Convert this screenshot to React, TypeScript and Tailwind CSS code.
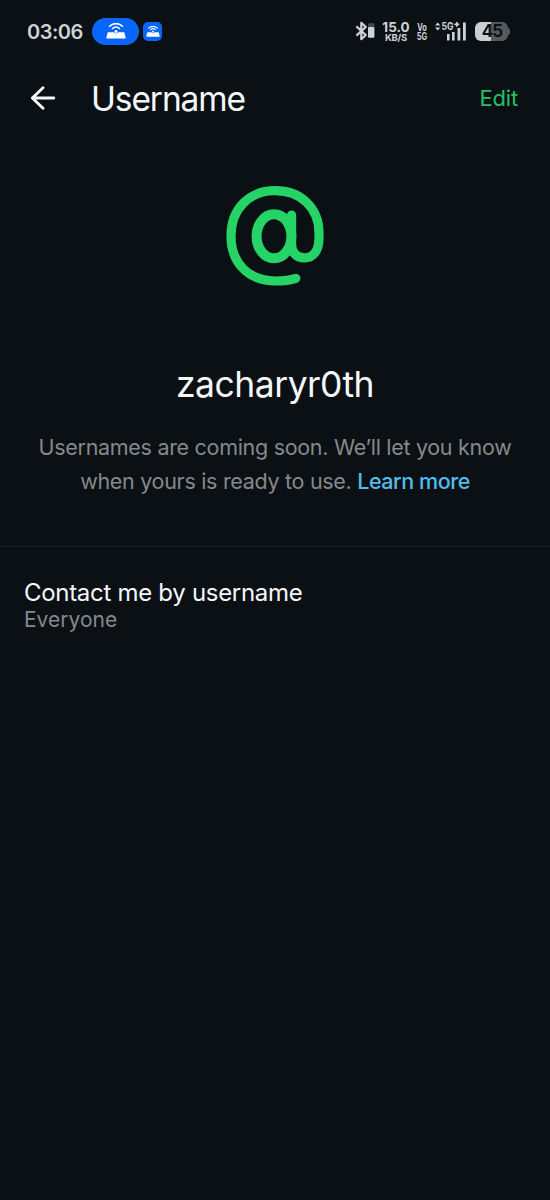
import React from 'react';

function CastIcon({ className }: { className: string }) {
  return (
    <svg viewBox="0 0 20 16" className={className} fill="none" aria-hidden="true">
      <path d="M1.8 9.2h16.4l1.4 4.8c.3.9-.1 1.5-1 1.5H1.4c-.9 0-1.3-.6-1-1.5z" fill="white" />
      <circle cx="10" cy="8.2" r="2.2" fill="#0866ff" />
      <circle cx="10" cy="8.4" r="1.5" fill="white" />
      <path d="M6.6 5.5a5 5 0 0 1 6.8 0M3.6 3.2a9.2 9.2 0 0 1 12.8 0" stroke="white" strokeWidth="1.6" strokeLinecap="round" />
    </svg>
  );
}

function BluetoothIcon() {
  return (
    <svg viewBox="0 0 20 20" className="h-5 w-5" fill="none" aria-hidden="true">
      <path d="M1.4 5.4l9.4 8.6-4.5 4.2V1.8l4.5 4.2-9.4 8.6" stroke="#d0d3d5" strokeWidth="2.2" strokeLinejoin="round" />
      <rect x="13" y="2.3" width="6.4" height="4" rx="1" fill="#45494c" />
      <rect x="13" y="6" width="6.4" height="10.8" rx="1" fill="#d0d3d5" />
    </svg>
  );
}

function SignalIcon() {
  return (
    <svg viewBox="0 0 32 20" className="h-5 w-8" aria-hidden="true">
      <path d="M0 4.6l2.7-3.1 2.7 3.1zM0 6.4h5.4L2.7 9.5z" fill="#d0d3d5" />
      <text x="6.6" y="8.8" fontFamily="Inter, sans-serif" fontSize="10.5" fontWeight="700" textLength="12" lengthAdjust="spacingAndGlyphs" fill="#d0d3d5">5G</text>
      <path d="M19.4 3.4h4.8M21.8 1v4.8" stroke="#d0d3d5" strokeWidth="1.6" />
      <rect x="12" y="13" width="2.6" height="6.5" fill="#d0d3d5" />
      <rect x="17" y="11" width="2.6" height="8.5" fill="#d0d3d5" />
      <rect x="22.5" y="7" width="2.8" height="12.5" fill="#d0d3d5" />
      <rect x="28" y="1.5" width="2.8" height="18" fill="#d0d3d5" />
    </svg>
  );
}

function StatusBar() {
  return (
    <div className="flex h-[62px] items-center pl-[27px] pr-10 text-[#d0d3d5]">
      <span className="w-[65px] pt-px text-[20px] leading-6 font-semibold tracking-[-0.5px]">03:06</span>
      <div className="flex h-[27px] w-[47px] items-center justify-center rounded-full bg-[#0866ff]">
        <CastIcon className="h-4 w-5" />
      </div>
      <div className="ml-1 flex h-[19px] w-[19px] items-center justify-center rounded-[5px] bg-[#0866ff]">
        <CastIcon className="h-[11px] w-[14px]" />
      </div>

      <div className="ml-auto flex items-center">
        <BluetoothIcon />
        <div className="ml-[7px] w-[28px] pt-px text-center font-bold">
          <div className="text-[13.5px] leading-[10px]">15.0</div>
          <div className="pt-px text-[9.5px] leading-[9px] tracking-[-0.2px]">KB/S</div>
        </div>
        <div className="ml-[6px] flex w-[12px] scale-x-75 flex-col items-center pt-px text-[10px] leading-[9px] font-bold">
          <div>Vo</div>
          <div>5G</div>
        </div>
        <div className="ml-[7px]">
          <SignalIcon />
        </div>
        <div className="ml-2 flex h-[19px] w-[33px] items-center justify-center rounded-[6px] bg-linear-to-r from-[#caced0] from-48% to-[#565a5d] to-48% pt-px pl-px text-[17px] leading-none font-bold tracking-[-1px] text-[#0b1014]">
          45
        </div>
        <div className="h-[7px] w-[2px] rounded-r-full bg-[#565a5d]" />
      </div>
    </div>
  );
}

function AtSign() {
  return (
    <svg viewBox="0 0 120 120" className="h-[120px] w-[120px]" fill="none" stroke="#25d366" strokeLinecap="round" aria-hidden="true">
      <path d="M80.8 103.3C75 105.3 69 106 60.5 106C33.5 106 16 88 16 61C16 34 34 15.7 60 15.7C86 15.7 104 33 104 58V62.5C104 75.5 98.5 82.8 89.5 82.8C81 82.8 76.6 77.5 76.6 69V40" strokeWidth="9.2" />
      <ellipse cx="59" cy="61.3" rx="17.4" ry="22" strokeWidth="10" />
    </svg>
  );
}

export default function App() {
  return (
    <div className="min-h-[1200px] w-full bg-[#0b1014] font-[Inter,sans-serif] text-[#f5f8fa]">
      <StatusBar />

      <header className="flex h-[72px] items-center pr-8 pl-[30px]">
        <button aria-label="Back">
          <svg viewBox="0 0 26 24" className="h-6 w-[26px]" fill="none" stroke="currentColor" strokeWidth="2.9" strokeLinecap="round" strokeLinejoin="round" aria-hidden="true">
            <path d="M13 1.8L2.4 12L13 22.2M2.4 12H23.8" />
          </svg>
        </button>
        <h1 className="ml-[35px] pt-px text-[33.5px] leading-10 tracking-[-1.1px]">Username</h1>
        <button className="ml-auto text-[22px] leading-7 tracking-[-0.2px] text-[#25c063]">Edit</button>
      </header>

      <section className="flex flex-col items-center border-b border-[#1b2024] pt-[41px] pb-12">
        <AtSign />
        <h2 className="mt-[67px] text-[35.5px] leading-[46px] tracking-[-0.5px]">zacharyr0th</h2>
        <p className="mt-[23px] text-center text-[21.5px] leading-[33.5px] tracking-[-0.3px] text-[#85898c]">
          Usernames are coming soon. We’ll let you know
          <br />
          when yours is ready to use. <a className="font-medium tracking-[-0.45px] text-[#53bdeb]">Learn more</a>
        </p>
      </section>

      <div className="px-6 pt-[30px]">
        <div className="text-2xl leading-8 tracking-[-0.3px]">Contact me by username</div>
        <div className="text-[21px] leading-[22px] text-[#85898c]">Everyone</div>
      </div>
    </div>
  );
}
